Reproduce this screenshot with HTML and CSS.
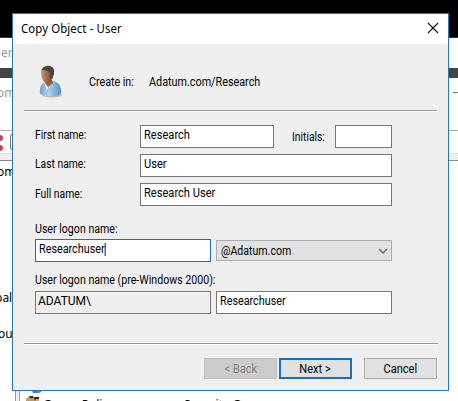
FILE: index.html
```html
<!DOCTYPE html>
<html lang="en">
<head>
<meta charset="utf-8">
<title>Copy Object - User</title>
<link rel="stylesheet" href="styles.css">
</head>
<body>
<div class="desktop">
  <div class="black"></div>
  <div class="caption">er</div>
  <div class="band"></div>
  <div class="parent-title"><span>om</span><i></i></div>
  <div class="toolbar">
    <svg class="delete" width="4" height="18" viewBox="0 0 4 18"><circle cx="0" cy="4" r="3"/><circle cx="0" cy="14" r="3"/></svg>
    <span class="tool"></span>
  </div>
  <div class="toolbar-edge"></div>
  <div class="tree"><span class="t1">om</span><span class="t2">bal</span><span class="t3">ou</span></div>
  <div class="list">
    <span class="splitter"></span>
    <svg class="group-icon" width="25" height="10" viewBox="0 0 25 10"><path d="M12 0h9v1l-2 1h-6z" fill="#557aae"/><path d="M6 9q0-3 4-3t5 2l1 2H6z" fill="#c59a61"/><path d="M9 5h4l1 2h-4zM14 6h5v4h-4z" fill="#292725"/><path d="M16 8h3v2h-4z" fill="#d8aa70"/></svg>
    <span class="group-name">Group Policy</span>
    <span class="group-type">Security Group</span>
  </div>
</div>
<main class="dialog">
  <header class="titlebar">
    <h1>Copy Object - User</h1>
    <svg class="close" width="12" height="12" viewBox="0 0 12 12"><path d="M1 1l10 10M11 1L1 11"/></svg>
  </header>
  <section class="intro">
    <svg class="person" width="25" height="34" viewBox="0 0 25 34">
      <defs>
        <linearGradient id="skin"><stop stop-color="#c8956a"/><stop offset=".5" stop-color="#9b6b48"/><stop offset="1" stop-color="#634530"/></linearGradient>
        <linearGradient id="shirt"><stop stop-color="#6f9fcd"/><stop offset=".4" stop-color="#b4d5f2"/><stop offset="1" stop-color="#568bc0"/></linearGradient>
      </defs>
      <ellipse cx="13" cy="30" rx="10" ry="2.5" fill="#bbb"/>
      <path d="M1 29Q0 19 6 17l9-1q6 2 7 8 1 5-2 6-9 3-19-1z" fill="url(#shirt)"/>
      <path d="M5 17l3 9 5-9z" fill="#f5f8fb"/>
      <path d="M6 15h7l1 3-5 4-3-4z" fill="#8e6040"/>
      <path d="M2 7Q2 2 8 2q6 0 6 7 0 6-4 9-4 2-6-3-2-3-2-8z" fill="url(#skin)"/>
      <path d="M3 4Q6 0 11 1q5 1 4 8l-2 5-2-2V8q-1-3-8-3z" fill="#464442"/>
      <path d="M7 30l3-9M17 30v-5" stroke="#8db7df" fill="none"/>
    </svg>
    <span class="create"><span class="s-create">Create in:</span></span><span class="path">Adatum.com/Research</span>
  </section>
  <hr class="rule">
  <form class="names">
    <label class="l-first"><span>First name:</span></label><div class="field f-first"><span class="v-first">Research</span></div>
    <label class="l-initials"><span>Initials:</span></label><div class="field"></div>
    <label class="l-last"><span>Last name:</span></label><div class="field wide"><span class="v-first">User</span></div>
    <label class="l-full"><span>Full name:</span></label><div class="field wide"><span class="v-first">Research User</span></div>
  </form>
  <section class="logon">
    <div class="heading h-logon"><span>User logon name:</span></div>
    <div class="pair">
      <div class="field active"><span class="v-logon">Researchuser<i class="caret"></i></span></div>
      <div class="combo"><span>@Adatum.com</span><svg width="10" height="6" viewBox="0 0 10 6"><path d="M1 1l4 4 4-4"/></svg></div>
    </div>
    <div class="heading h-pre"><span class="s-pre">User logon name (pre-Windows 2000):</span></div>
    <div class="pair">
      <div class="field readonly"><span class="v-domain">ADATUM\</span></div>
      <div class="field"><span class="v-logon">Researchuser</span></div>
    </div>
  </section>
  <hr class="rule lower">
  <footer class="actions">
    <div class="button disabled"><span>&lt; Back</span></div>
    <div class="button primary"><span>Next &gt;</span></div>
    <div class="button cancel"><span>Cancel</span></div>
  </footer>
</main>
</body>
</html>
```
FILE: styles.css
```css
* { box-sizing: border-box; }
body { margin: 0; width: 458px; height: 401px; overflow: hidden; position: relative; background: #fff; color: #000; font: 12px/14px Roboto, sans-serif; }
span, label { white-space: nowrap; }
svg { display: block; flex: none; }
.desktop { height: 401px; overflow: hidden; font: 12px/14px "Noto Sans", sans-serif; }
.black { height: 38px; background: #000; border-bottom: 1px solid #333; }
.caption { height: 30px; padding: 8px 0 0 1px; color: #999; }
.band { height: 10px; background: #444; }
.parent-title { height: 52px; padding-top: 8px; color: #999; display: flex; justify-content: space-between; }
.parent-title span { margin-left: -3px; }
.parent-title i { width: 5px; height: 1px; margin-top: 6px; background: #777; }
.toolbar { height: 24px; border-top: 1px solid #aaa; border-bottom: 1px solid #ddd; display: flex; padding-top: 3px; }
.delete { fill: #b84956; }
.tool { width: 12px; height: 16px; margin-left: 6px; border: 1px solid #777; border-radius: 2px; }
.toolbar-edge { height: 7px; background: #eee; border-bottom: 1px solid #888; }
.tree { height: 230px; display: flex; flex-direction: column; padding-top: 4px; }
.t1 { margin-left: -3px; }
.t2 { margin: 112px 0 0 -5px; }
.t3 { margin: 22px 0 0 -2px; }
.list { height: 10px; display: flex; padding-left: 15px; overflow: hidden; }
.splitter { width: 5px; height: 10px; border: solid #999; border-width: 0 1px; background: #eee; }
.group-name { margin: 7px 0 0 -2px; width: 141px; }
.group-type { margin-top: 7px; }

.dialog { position: absolute; left: 12px; top: 13px; width: 437px; height: 378px; border: 1px solid #2876b5; background: #efefef; }
.dialog span { display: inline-block; transform-origin: 0 50%; }
.titlebar { height: 30px; background: #fff; display: flex; justify-content: space-between; padding: 7px 9px 0 8px; }
.titlebar h1 { margin: 0; font: 12px/16px "Noto Sans", sans-serif; letter-spacing: .1px; transform: scaleX(.95); transform-origin: 0 50%; }
.close { margin-top: 1px; }
.close path { fill: none; stroke: #111; stroke-width: 1.1; }
.intro { height: 66px; display: flex; padding: 21px 0 0 26px; }
.create { margin: 10px 0 0 25px; width: 60px; }
.s-create { transform: scaleX(.89); }
.path { margin-top: 10px; transform: scaleX(.9); }
.rule { margin: 0 11px; height: 2px; border: 0; border-top: 1px solid #999; background: #fff; }
.names { margin: 13px 0 0 22px; width: 357px; display: grid; grid-template-columns: 105px 134px 61px 57px; grid-template-rows: repeat(3, 23px); row-gap: 6px; }
.names label { padding-top: 3px; }
.names label span { transform: scaleX(.86); }
.names .l-initials { padding: 5px 0 0 18px; }
.names .l-full { padding-top: 4px; }
.wide { grid-column: span 3; }
.field { height: 23px; border: 1px solid #777; background: #fff; padding: 2px 3px; display: flex; align-items: flex-start; }
.field .v-first { transform: scaleX(.925); }
.field .v-logon { transform: scaleX(.9); }
.logon { margin: 16px 0 0 22px; width: 357px; }
.heading { height: 17px; }
.heading span { transform: scaleX(.885); }
.h-pre { height: 29px; padding-top: 11px; }
.pair { display: grid; grid-template-columns: 176px 176px; gap: 5px; align-items: center; }
.active { border-color: #1a70b0; }
.caret { display: inline-block; width: 1px; height: 13px; vertical-align: -3px; background: #000; }
.combo { height: 21px; border: 1px solid #adadad; background: #e1e1e1; padding: 0 3px 0 4px; display: flex; justify-content: space-between; align-items: center; }
.combo span { transform: scaleX(.88); }
.combo path { fill: none; stroke: #666; stroke-width: 1.4; }
.readonly { background: #efefef; }
.readonly span { margin-left: -1px; }
.lower { margin-top: 29px; margin-right: 10px; }
.actions { display: flex; margin: 13px 11px 0 191px; width: 233px; }
.button { width: 73px; height: 21px; border: 1px solid #adadad; background: #e1e1e1; display: flex; justify-content: center; align-items: center; }
.dialog .button span { transform-origin: 50% 50%; transform: scaleX(.92); }
.disabled { background: #ccc; border-color: #bfbfbf; color: #838383; }
.primary { margin-left: 2px; border: 2px solid #1672bc; }
.cancel { margin-left: 12px; }
```
